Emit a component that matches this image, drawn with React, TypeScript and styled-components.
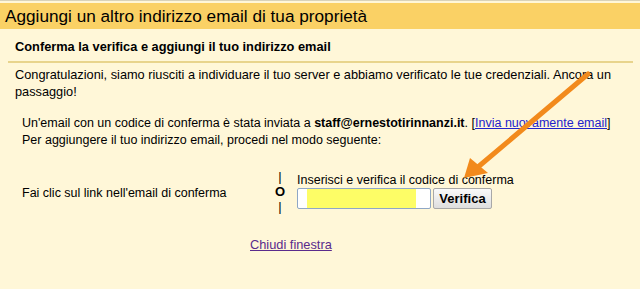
import styled, { createGlobalStyle } from 'styled-components';

const GlobalStyle = createGlobalStyle`
  html, body {
    margin: 0;
    padding: 0;
    background: #fff7d8;
  }
  body {
    font-family: 'Liberation Sans', Arial, sans-serif;
    color: #000;
  }
`;

const Page = styled.div`
  position: relative;
  width: 640px;
  height: 289px;
  overflow: hidden;
  background: #fff7d8;
  border-top: 1px solid #d9d2b8;
  box-sizing: border-box;
  padding-top: 2px;
`;

const Header = styled.h1`
  margin: 0;
  height: 26px;
  padding-left: 5px;
  background: #fad165;
  font-size: 17.2px;
  font-weight: normal;
  line-height: 26px;
  white-space: nowrap;
`;

const SubHeader = styled.h2`
  margin: 0;
  padding: 10px 15px 0;
  height: 22px;
  font-size: 12.8px;
  font-weight: bold;
  line-height: 16px;
`;

const Separator = styled.hr`
  margin: 0 7px 0 8px;
  height: 2px;
  border: 0;
  background: #e8d48c;
`;

const Content = styled.div`
  padding: 3px 15px 0;
  font-size: 12.5px;
  line-height: 17px;
`;

const Para = styled.p<{ indent?: number }>`
  margin: 0;
  padding-left: ${p => p.indent ?? 0}px;
`;

const Intro = styled(Para)`
  font-size: 12.75px;
`;

const Notice = styled(Para)`
  margin-top: 15px;
  white-space: nowrap;
`;

const Link = styled.a<{ visited?: boolean }>`
  color: ${p => (p.visited ? '#5a2b8c' : '#2222cc')};
  text-decoration: underline;
`;

const Steps = styled.div`
  display: flex;
  align-items: center;
  margin-top: 18px;
  padding-left: 22px;
  font-size: 12.5px;
`;

const StepLeft = styled.div`
  width: 252px;
  padding-top: 4px;
`;

const OrColumn = styled.div`
  display: flex;
  flex-direction: column;
  align-items: center;
  width: 12px;
  padding-top: 2px;
  line-height: 15px;
  font-size: 13px;
`;

const OrMark = styled.span<{ bold?: boolean }>`
  font-weight: ${p => (p.bold ? 'bold' : 'normal')};
`;

const StepRight = styled.div`
  display: flex;
  flex-direction: column;
  margin-left: 11px;
`;

const StepLabel = styled.div`
  line-height: 15px;
`;

const CodeRow = styled.div`
  display: flex;
  align-items: center;
  gap: 2px;
`;

const CodeInput = styled.input`
  box-sizing: border-box;
  width: 134px;
  height: 21px;
  margin: 0;
  border: 1px solid #8fa7c6;
  border-radius: 2px;
  background: linear-gradient(
    to right,
    #fff 9px,
    #fdfd66 9px,
    #fdfd66 118px,
    #fff 118px
  );
  outline: none;
`;

const Button = styled.button`
  box-sizing: border-box;
  width: 59px;
  height: 21px;
  padding: 0;
  border: 1px solid #a8a8a8;
  border-radius: 2px;
  background: linear-gradient(#fafafa, #dedede);
  font-family: 'Liberation Sans', Arial, sans-serif;
  font-size: 13px;
  font-weight: bold;
  color: #000;
`;

const Footer = styled.div`
  margin-top: 23px;
  padding-left: 250px;
  font-size: 12.8px;
`;

const Arrow = styled.svg`
  position: absolute;
  left: 0;
  top: 0;
  pointer-events: none;
`;

export default function App() {
  return (
    <>
      <GlobalStyle />
      <Page>
        <Header>Aggiungi un altro indirizzo email di tua proprietà</Header>
        <SubHeader>Conferma la verifica e aggiungi il tuo indirizzo email</SubHeader>
        <Separator />
        <Content>
          <Intro>
            Congratulazioni, siamo riusciti a individuare il tuo server e abbiamo verificato le tue credenziali. Ancora un
            passaggio!
          </Intro>
          <Notice indent={7}>
            Un'email con un codice di conferma è stata inviata a <b>staff@ernestotirinnanzi.it</b>.{' '}
            [<Link href="#">Invia nuovamente email</Link>]
            <br />
            Per aggiungere il tuo indirizzo email, procedi nel modo seguente:
          </Notice>
        </Content>
        <Steps>
          <StepLeft>Fai clic sul link nell'email di conferma</StepLeft>
          <OrColumn>
            <OrMark>|</OrMark>
            <OrMark bold>O</OrMark>
            <OrMark>|</OrMark>
          </OrColumn>
          <StepRight>
            <StepLabel>Inserisci e verifica il codice di conferma</StepLabel>
            <CodeRow>
              <CodeInput type="text" />
              <Button>Verifica</Button>
            </CodeRow>
          </StepRight>
        </Steps>
        <Footer>
          <Link href="#" visited>
            Chiudi finestra
          </Link>
        </Footer>
        <Arrow width="640" height="289" viewBox="0 0 640 289">
          <line x1="588" y1="73" x2="478" y2="166" stroke="#f28a1c" strokeWidth="5" strokeLinecap="round" />
          <polygon points="464,177 470,157 488,172" fill="#f28a1c" />
        </Arrow>
      </Page>
    </>
  );
}
